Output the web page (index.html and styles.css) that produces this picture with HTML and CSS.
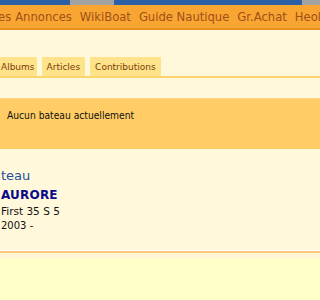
FILE: index.html
```html
<!DOCTYPE html>
<html lang="fr">
<head>
<meta charset="utf-8">
<link rel="stylesheet" href="styles.css">
</head>
<body>
<div class="top">
  <span class="seg blue w70"></span>
  <span class="seg gray w44"></span>
  <span class="seg blue grow"></span>
  <span class="seg gray w18"></span>
</div>
<nav class="nav">
  <span class="nav-item first">es</span>
  <span class="nav-item">Annonces</span>
  <span class="nav-item">WikiBoat</span>
  <span class="nav-item">Guide Nautique</span>
  <span class="nav-item">Gr.Achat</span>
  <span class="nav-item">Heol</span>
</nav>
<div class="tabs">
  <span class="tab">Albums</span>
  <span class="tab">Articles</span>
  <span class="tab">Contributions</span>
</div>
<div class="notice">Aucun bateau actuellement</div>
<div class="boat">
  <div class="boat-title">teau</div>
  <div class="boat-name">AURORE</div>
  <div class="boat-model">First 35 S 5</div>
  <div class="boat-year">2003 -</div>
</div>
<div class="sep"></div>
<div class="footer"></div>
</body>
</html>
```
FILE: styles.css
```css
html, body {
  margin: 0;
  padding: 0;
}
body {
  background: #fff8da;
  font-family: "DejaVu Sans", Verdana, sans-serif;
  width: 320px;
  height: 300px;
  overflow: hidden;
  display: flex;
  flex-direction: column;
}
.top {
  display: flex;
  height: 5px;
  flex: none;
}
.seg { display: block; height: 100%; }
.blue { background: #2b5fa6; }
.gray { background: #a3a3a3; }
.w70 { width: 70px; }
.w44 { width: 44px; }
.w18 { width: 18px; }
.grow { flex: 1; }
.nav {
  display: flex;
  flex: none;
  gap: 8px;
  height: 25px;
  align-items: center;
  background: #f9a531;
  border-bottom: 2px solid #e8901c;
  white-space: nowrap;
  overflow: hidden;
  font-size: 11.6px;
  color: #a0501a;
  padding-top: 1px;
  box-sizing: border-box;
}
.nav-item { flex: none; }
.nav-item.first { margin-left: -2px; margin-right: -4px; }
.tabs {
  display: flex;
  flex: none;
  gap: 5px;
  margin-top: 27px;
  border-bottom: 2px solid #fdd46c;
  height: 19px;
  align-items: stretch;
}
.tab {
  background: #ffe38a;
  color: #7a3c08;
  font-size: 9px;
  padding: 0 5px;
  display: flex;
  align-items: center;
}
.tab:first-child { padding-left: 1px; padding-right: 2px; }
.notice {
  flex: none;
  margin-top: 20px;
  height: 51px;
  background: #ffcc66;
  border-top: 1px solid #fdd48a;
  font-family: "DejaVu Sans Condensed", "DejaVu Sans", sans-serif;
  font-stretch: semi-condensed;
  font-size: 10.2px;
  color: #111;
  padding: 11px 7px 0;
  box-sizing: border-box;
}
.boat {
  flex: none;
  padding: 17px 1px 0;
  height: 101px;
  box-sizing: border-box;
}
.boat-title {
  color: #1f4fa0;
  font-size: 13px;
  line-height: 20px;
}
.boat-name {
  color: #0a0a8a;
  font-size: 12px;
  font-weight: bold;
  letter-spacing: 0.2px;
  line-height: 18px;
}
.boat-model {
  font-size: 10.5px;
  color: #111;
  line-height: 15px;
}
.boat-year {
  font-size: 10px;
  color: #111;
  line-height: 14px;
}
.sep {
  flex: none;
  height: 1px;
  background: #fff;
  border-bottom: 2px solid #fcc77a;
}
.footer {
  flex: 1;
  background: #ffffc8;
  border-top: 6px solid #fff6d6;
}
```
